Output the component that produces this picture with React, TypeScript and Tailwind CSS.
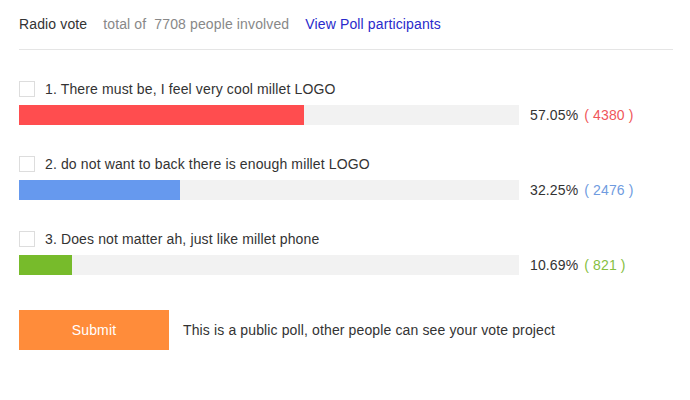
import React from 'react'

type Option = {
  label: string
  percent: number
  count: number
  bar: string
  countColor: string
}

const options: Option[] = [
  { label: '1. There must be, I feel very cool millet LOGO', percent: 57.05, count: 4380, bar: 'bg-[#ff4d4f]', countColor: 'text-[#f0565a]' },
  { label: '2. do not want to back there is enough millet LOGO', percent: 32.25, count: 2476, bar: 'bg-[#6699ee]', countColor: 'text-[#6f9be0]' },
  { label: '3. Does not matter ah, just like millet phone', percent: 10.69, count: 821, bar: 'bg-[#77bb2b]', countColor: 'text-[#86c03f]' },
]

const PollItem = ({ option }: { option: Option }) => (
  <div className="mt-[29px]">
    <label className="flex items-center h-5 gap-[10px]">
      <span className="w-4 h-4 border border-[#dddddd] bg-white shrink-0" />
      <span>{option.label}</span>
    </label>
    <div className="flex items-center mt-[6px]">
      <div className="w-[500px] h-5 bg-[#f2f2f2]">
        <div className={`h-full ${option.bar}`} style={{ width: `${option.percent}%` }} />
      </div>
      <span className="ml-[11px]">{option.percent.toFixed(2)}%</span>
      <span className={`ml-[6px] ${option.countColor}`}>( {option.count} )</span>
    </div>
  </div>
)

export default function App() {
  return (
    <div className="min-h-[400px] bg-white pl-[19px] pr-[17px] text-sm tracking-[0.13px] text-[#333333] font-['Liberation_Sans',Arial,sans-serif]">
      <div className="flex items-center h-5 pt-[14px] pb-[15px] box-content border-b border-[#e5e5e5]">
        <span>Radio vote</span>
        <span className="ml-4 text-[#888888]">total of&nbsp; 7708 people involved</span>
        <a className="ml-4 text-[#2a2acb] cursor-pointer">View Poll participants</a>
      </div>

      {options.map((o) => (
        <PollItem key={o.label} option={o} />
      ))}

      <div className="flex items-center mt-[35px]">
        <button className="w-[150px] h-10 bg-[#ff8c3a] text-white">Submit</button>
        <span className="ml-[14px]">This is a public poll, other people can see your vote project</span>
      </div>
    </div>
  )
}
